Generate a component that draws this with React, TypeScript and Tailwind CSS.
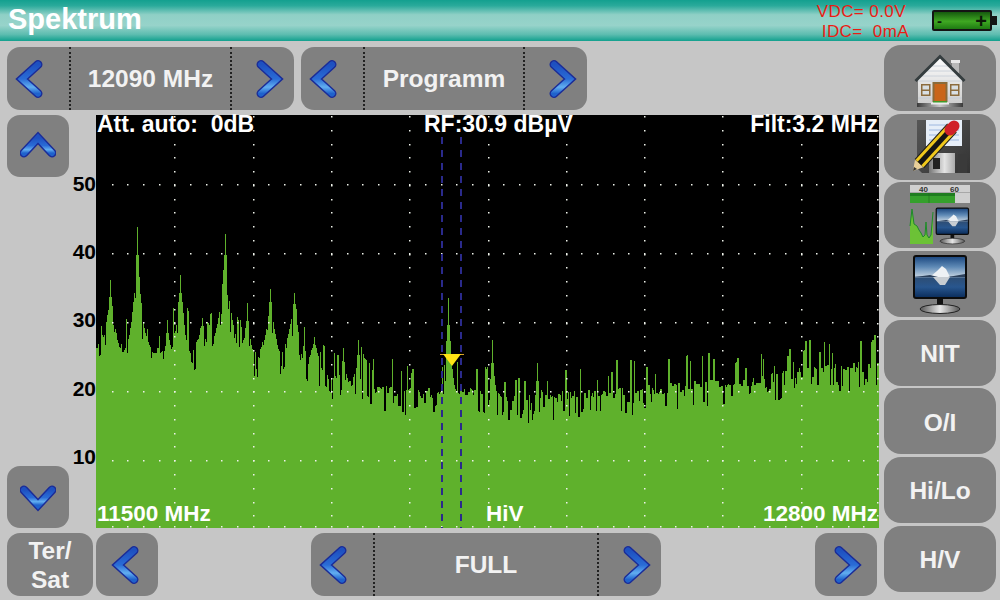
import React from "react";

const W = 783;
const H = 413;

function levelAt(x: number) {
  const pts: [number, number][] = [
    [96, 345], [123, 352], [190, 355], [225, 350], [260, 362], [300, 365], [323, 376], [345, 383], [373, 390],
    [440, 395], [470, 393], [510, 402], [560, 397], [620, 393], [680, 388], [730, 384], [780, 377], [830, 370], [879, 367],
  ];
  for (let i = 0; i < pts.length - 1; i++) {
    const [a, b] = pts[i];
    const [c, d] = pts[i + 1];
    if (x >= a && x <= c) return b + ((d - b) * (x - a)) / (c - a);
  }
  return 380;
}

const PEAKS: [number, number, number][] = [
  [110, 280, 3.5], [137, 227, 4], [167, 320, 2], [180, 275, 4], [202, 318, 4], [225, 234, 5], [247, 303, 2.5],
  [270, 289, 5], [294, 293, 6], [314, 337, 4], [343, 348, 2], [358, 340, 2.5], [448, 298, 3], [492, 340, 2],
  [537, 363, 1.5],
];

function buildSpectrum() {
  let seed = 20240611;
  const rnd = () => {
    seed = (seed * 1664525 + 1013904223) >>> 0;
    return seed / 4294967296;
  };
  let d = `M0 ${H}`;
  let hold = 0;
  let val = 0;
  for (let px = 96; px < 879; px++) {
    if (hold <= 0) {
      const r = rnd();
      if (r < 0.2) val = -12 - rnd() * 22;
      else if (r < 0.42) val = 8 + rnd() * 15;
      else val = -6 + rnd() * 11;
      hold = 1 + Math.floor(rnd() * 1.9);
    }
    hold--;
    const l = levelAt(px);
    let maxH = 0;
    let near = false;
    for (const [p, top, w] of PEAKS) {
      const h = (levelAt(p) - top) * Math.exp(-Math.abs(px - p) / w);
      if (h > maxH) maxH = h;
      if (Math.abs(px - p) < 2) near = true;
    }
    const noise = near ? 0 : maxH > 15 ? Math.max(val, -4) : val;
    const y = l - maxH + noise;
    d += ` L${px - 96} ${Math.round(y - 115)} L${px - 95} ${Math.round(y - 115)}`;
  }
  return d + ` L${W} ${H} Z`;
}

const SPECTRUM = buildSpectrum();

function gridDots() {
  const dots: [number, number][] = [];
  for (let k = 1; k <= 10; k++) {
    const x = k === 10 ? W - 2 : 78.3 * k;
    for (let j = 0; j <= 30; j++) dots.push([Math.round(x), Math.round(13.77 * j) + 1]);
  }
  for (let k = 1; k <= 6; k++) {
    const y = k === 6 ? H - 2 : 69 * k;
    for (let j = 1; j < 50; j++) dots.push([Math.round(15.66 * j), y]);
  }
  return dots;
}
const DOTS = gridDots();

const CHEV = {
  left: "M25 5.5 L9 20 L25 34.5",
  right: "M11 5.5 L27 20 L11 34.5",
  up: "M4 27 L18 12 L32 27",
  down: "M4 13 L18 28 L32 13",
};

function Chevron({ dir }: { dir: keyof typeof CHEV }) {
  const id = `chev-${dir}`;
  return (
    <svg width="36" height="40" viewBox="0 0 36 40" className="block shrink-0">
      <defs>
        <linearGradient id={id} x1="0" y1="0" x2="0" y2="1">
          <stop offset="0" stopColor="#1e50c0" />
          <stop offset="0.5" stopColor="#2a6cd6" />
          <stop offset="0.78" stopColor="#62aef0" />
          <stop offset="1" stopColor="#1f62cc" />
        </linearGradient>
      </defs>
      <path d={CHEV[dir]} fill="none" stroke="#1a2c98" strokeWidth="9" strokeLinecap="round" strokeLinejoin="miter" />
      <path d={CHEV[dir]} fill="none" stroke={`url(#${id})`} strokeWidth="6" strokeLinecap="round" strokeLinejoin="miter" />
    </svg>
  );
}

function Sep() {
  return <div className="w-0 self-stretch border-l-2 border-dotted border-[#222]" />;
}

function Spinner({ label, className }: { label: string; className: string }) {
  return (
    <div className={`flex h-[63px] items-stretch rounded-[13px] bg-[#808080] ${className}`}>
      <div className="flex w-[62px] items-center justify-center pr-[14px]">
        <Chevron dir="left" />
      </div>
      <Sep />
      <div className="flex flex-1 items-center justify-center pt-[1px] text-[24.5px] font-bold text-[#f2f2f2]">{label}</div>
      <Sep />
      <div className="flex w-[62px] items-center justify-center pl-[10px]">
        <Chevron dir="right" />
      </div>
    </div>
  );
}

function ArrowBtn({ dir, className = "" }: { dir: keyof typeof CHEV; className?: string }) {
  return (
    <div className={`flex h-[62px] w-[62px] items-center justify-center rounded-[13px] bg-[#808080] ${className}`}>
      <Chevron dir={dir} />
    </div>
  );
}

function SideBtn({ children }: { children: React.ReactNode }) {
  return (
    <div className="flex h-[66px] w-[112px] items-center justify-center rounded-[17px] bg-[#808080] text-[24.5px] font-bold text-[#f2f2f2]">
      {children}
    </div>
  );
}

function HouseIcon() {
  return (
    <svg width="90" height="60" viewBox="0 0 90 60" className="ml-[10px] block">
      <defs>
        <linearGradient id="wall" x1="0" y1="0" x2="0" y2="1">
          <stop offset="0" stopColor="#ffffff" />
          <stop offset="1" stopColor="#cfcfcf" />
        </linearGradient>
        <linearGradient id="base" x1="0" y1="0" x2="1" y2="0">
          <stop offset="0" stopColor="#3a3a3a" />
          <stop offset="0.5" stopColor="#c8c8c8" />
          <stop offset="1" stopColor="#3a3a3a" />
        </linearGradient>
      </defs>
      <rect x="52" y="13" width="7" height="12" fill="#b8b8b8" />
      <rect x="51" y="12" width="9" height="3" fill="#e8e8e8" />
      <polygon points="40,8 18,31 18,55 62,55 62,31" fill="url(#wall)" />
      <g stroke="#c4ccd6" strokeWidth="0.8">
        <line x1="32" y1="18" x2="48" y2="18" />
        <line x1="27" y1="23" x2="53" y2="23" />
        <line x1="22" y1="28" x2="58" y2="28" />
        <line x1="18" y1="33" x2="62" y2="33" />
        <line x1="18" y1="50" x2="62" y2="50" />
      </g>
      <polyline points="15.5,33 40,8.5 64.5,33" fill="none" stroke="#353d3f" strokeWidth="3" />
      <rect x="32.5" y="34" width="15" height="20" fill="#8a6a3a" />
      <rect x="34.5" y="36" width="11" height="17" fill="#c9651a" />
      <rect x="33" y="53" width="14" height="2" fill="#3f9a2a" />
      {[21, 50].map((x) => (
        <g key={x}>
          <rect x={x} y="36" width="9.5" height="12" fill="#8c6c3e" />
          <rect x={x + 1.5} y="37.5" width="6.5" height="4" fill="#d8dfe4" />
          <rect x={x + 1.5} y="43" width="6.5" height="3.5" fill="#d8dfe4" />
        </g>
      ))}
      <rect x="17" y="55" width="46" height="4" fill="url(#base)" />
      <rect x="31" y="54.5" width="18" height="2" fill="#ececec" />
    </svg>
  );
}

function SaveIcon() {
  return (
    <svg width="90" height="66" viewBox="0 0 90 66" className="ml-[10px] block">
      <defs>
        <linearGradient id="disk" x1="0" y1="0" x2="1" y2="1">
          <stop offset="0" stopColor="#565656" />
          <stop offset="1" stopColor="#333" />
        </linearGradient>
        <linearGradient id="shut" x1="0" y1="0" x2="1" y2="0">
          <stop offset="0" stopColor="#777" />
          <stop offset="0.6" stopColor="#e4e4e4" />
          <stop offset="1" stopColor="#aaa" />
        </linearGradient>
      </defs>
      <polygon points="17,6 70,6 70,59 22,59 17,54" fill="url(#disk)" />
      <rect x="26" y="6" width="36" height="26" fill="#e6eef8" />
      <g stroke="#8aa8d8" strokeWidth="0.8">
        <line x1="29" y1="11" x2="59" y2="11" />
        <line x1="29" y1="16" x2="59" y2="16" />
        <line x1="29" y1="21" x2="59" y2="21" />
        <line x1="29" y1="26" x2="59" y2="26" />
      </g>
      <rect x="29" y="39" width="26" height="20" fill="url(#shut)" />
      <rect x="33" y="44" width="7" height="11" fill="#222" />
      <rect x="58" y="40" width="9" height="19" fill="#3a3a3a" />
      <polygon points="13,57 15,46 24,53" fill="#e8cf9a" />
      <polygon points="13,57 14,53 17,55" fill="#333" />
      <line x1="19.5" y1="49.5" x2="52" y2="14" stroke="#1c1c1c" strokeWidth="13" />
      <line x1="19.5" y1="49.5" x2="52" y2="14" stroke="#f0c81c" strokeWidth="11" />
      <line x1="19.5" y1="49.5" x2="52" y2="14" stroke="#161616" strokeWidth="5" />
      <line x1="50" y1="16" x2="54" y2="12" stroke="#d0202a" strokeWidth="11" strokeLinecap="round" />
    </svg>
  );
}

function Monitor({ id }: { id: string }) {
  return (
    <>
      <defs>
        <linearGradient id={`${id}s`} x1="0" y1="0" x2="0" y2="1">
          <stop offset="0" stopColor="#1e4a82" />
          <stop offset="0.25" stopColor="#5f8ab6" />
          <stop offset="0.47" stopColor="#b8cadb" />
          <stop offset="0.53" stopColor="#2d4e76" />
          <stop offset="0.75" stopColor="#28568e" />
          <stop offset="1" stopColor="#0c2f5e" />
        </linearGradient>
        <linearGradient id={`${id}b`} x1="0" y1="0" x2="1" y2="0">
          <stop offset="0" stopColor="#555" />
          <stop offset="0.5" stopColor="#e6e6e6" />
          <stop offset="1" stopColor="#555" />
        </linearGradient>
      </defs>
      <rect x="1" y="1" width="54" height="44" rx="3" fill="#0c0c0c" />
      <rect x="3" y="3" width="50" height="40" rx="1" fill={`url(#${id}s)`} />
      <polygon points="18,23 25,17 30,12 34,15 38,23" fill="#eef1f4" />
      <polygon points="3,23 18,21 26,23" fill="#2b3f5a" />
      <polygon points="36,23 53,20 53,23" fill="#2b3f5a" />
      <polygon points="21,23 38,23 33,31 28,31" fill="#c8cdd2" />
      <rect x="25" y="45" width="6" height="8" fill="#111" />
      <ellipse cx="28" cy="55" rx="20" ry="4.5" fill={`url(#${id}b)`} stroke="#222" strokeWidth="1" />
    </>
  );
}

function BigMonitor() {
  return (
    <svg width="56" height="60" viewBox="0 0 56 60" className="block">
      <Monitor id="big" />
    </svg>
  );
}

function ComboIcon() {
  return (
    <svg width="90" height="66" viewBox="0 0 90 66" className="ml-[10px] block">
      <rect x="10" y="3" width="60" height="7.5" fill="#d0d0d0" />
      <rect x="10" y="11" width="60" height="10" fill="#cfcfcf" />
      <rect x="10" y="11" width="45" height="10" fill="#35a02c" />
      <rect x="10" y="11" width="45" height="3" fill="#1f7d20" />
      <line x1="29" y1="11" x2="29" y2="21" stroke="#1e6a1e" strokeWidth="0.6" />
      <text x="19" y="9.5" fontSize="8" fontWeight="700" fill="#333" fontFamily="Liberation Sans">40</text>
      <text x="50" y="9.5" fontSize="8" fontWeight="700" fill="#333" fontFamily="Liberation Sans">60</text>
      <polygon points="10,62 10,44 12,27 14,42 17,44 19,48 21,51 23,55 25,53 26,40 27,53 29,56 31,53 33,30 33,62" fill="#6cc236" />
      <polyline points="10,44 12,27 14,42 17,44 19,48 21,51 23,55 25,53 26,40 27,53 29,56 31,53 33,30" fill="none" stroke="#1e8a2a" strokeWidth="1" />
      <g transform="translate(35 25) scale(0.62)">
        <Monitor id="mini" />
      </g>
    </svg>
  );
}

export default function App() {
  return (
    <div className="flex h-[600px] w-[1000px] flex-col overflow-hidden bg-[#c6c6c6] font-['Liberation_Sans',Arial,sans-serif]">
      <header className="flex h-[41px] items-center bg-[linear-gradient(180deg,#13a08f_0%,#2aaa9b_14%,#8fd0c6_36%,#97d3ca_62%,#5dbdb0_84%,#12a08e_100%)]">
        <div className="ml-[8px] pb-[3px] text-[29px] font-bold leading-none text-white">Spektrum</div>
        <div className="ml-auto mr-[3px] flex items-center">
          <div className="mr-[23px] whitespace-pre pt-[3px] text-[17px] leading-[20px] tracking-[0.4px] text-[#ea1c14]">
            <div>VDC= 0.0V</div>
            <div className="pl-[5px]">IDC=  0mA</div>
          </div>
          <div className="flex h-[21px] w-[60px] items-center justify-between rounded-[2px] border-2 border-[#141414] bg-[linear-gradient(180deg,#155a0e_0%,#3fa822_55%,#1e7a12_100%)] px-[3px] text-[15px] font-bold leading-none text-[#0c1a08]">
            <span>-</span>
            <span className="text-[20px]">+</span>
          </div>
          <div className="h-[9px] w-[5px] bg-[#141414]" />
        </div>
      </header>

      <div className="flex flex-1">
        <main className="flex w-[884px] flex-col pt-[6px]">
          <div className="flex gap-[7px] pl-[7px]">
            <Spinner label="12090 MHz" className="w-[287px]" />
            <Spinner label="Programm" className="w-[286px]" />
          </div>

          <div className="mt-[5px] flex h-[413px]">
            <div className="ml-[7px] flex w-[62px] flex-col justify-between">
              <ArrowBtn dir="up" />
              <ArrowBtn dir="down" />
            </div>
            <div className="flex w-[27px] flex-col items-end pt-[34px] text-[21px] font-bold text-black">
              {["50", "40", "30", "20", "10"].map((t) => (
                <div key={t} className="flex h-[68.3px] items-center leading-none">
                  {t}
                </div>
              ))}
            </div>
            <div className="relative h-[413px] w-[783px] bg-black">
              <svg width={W} height={H} viewBox={`0 0 ${W} ${H}`} className="block" shapeRendering="crispEdges">
                <path d={SPECTRUM} fill="#5fb12c" />
                {DOTS.map(([x, y], i) => (
                  <rect key={i} x={x} y={y} width="1.5" height="1.5" fill="#eef2ea" shapeRendering="auto" />
                ))}
                <line x1="346" y1="22" x2="346" y2={H} stroke="#2a2a8c" strokeWidth="2" strokeDasharray="7 6" />
                <line x1="365" y1="22" x2="365" y2={H} stroke="#2a2a8c" strokeWidth="2" strokeDasharray="7 6" />
                <rect x="344" y="239" width="24" height="1" fill="#d9a02a" />
                <polygon points="347,239 365,239 356,251" fill="#ffe414" shapeRendering="auto" />
              </svg>
              <div className="absolute inset-x-0 top-0 flex h-[19px] items-center justify-between whitespace-pre px-[1px] text-[23px] font-bold leading-none text-white">
                <span>Att. auto:  0dB</span>
                <span className="absolute left-[328px]">RF:30.9 dBµV</span>
                <span>Filt:3.2 MHz</span>
              </div>
              <div className="absolute inset-x-0 bottom-[4px] flex h-[20px] items-center justify-between whitespace-pre px-[1px] text-[22.5px] font-bold leading-none text-white">
                <span>11500 MHz</span>
                <span className="absolute left-[390px]">HiV</span>
                <span>12800 MHz</span>
              </div>
            </div>
          </div>

          <div className="mt-[5px] flex pl-[7px]">
            <div className="flex h-[63px] w-[86px] flex-col items-center justify-center rounded-[13px] bg-[#808080] text-[24.5px] font-bold leading-[29px] text-[#f2f2f2]">
              <span>Ter/</span>
              <span>Sat</span>
            </div>
            <ArrowBtn dir="left" className="ml-[3px] !h-[63px]" />
            <Spinner label="FULL" className="ml-[153px] w-[350px]" />
            <ArrowBtn dir="right" className="ml-[154px] !h-[63px]" />
          </div>
        </main>

        <aside className="flex w-[116px] flex-col gap-[2.7px] pt-[4px]">
          <SideBtn><HouseIcon /></SideBtn>
          <SideBtn><SaveIcon /></SideBtn>
          <SideBtn><ComboIcon /></SideBtn>
          <SideBtn><BigMonitor /></SideBtn>
          <SideBtn><span className="pt-[3px]">NIT</span></SideBtn>
          <SideBtn><span className="pt-[3px]">O/I</span></SideBtn>
          <SideBtn><span className="pt-[3px]">Hi/Lo</span></SideBtn>
          <SideBtn><span className="pt-[3px]">H/V</span></SideBtn>
        </aside>
      </div>
    </div>
  );
}
